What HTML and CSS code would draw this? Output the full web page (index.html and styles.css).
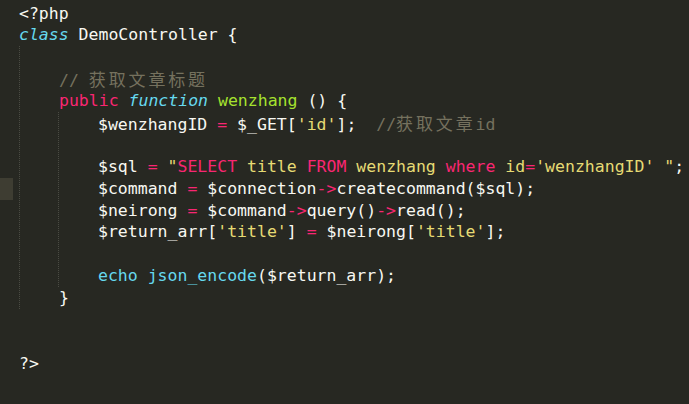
FILE: index.html
```html
<!DOCTYPE html>
<html lang="zh">
<head>
<meta charset="utf-8">
<title>DemoController</title>
<link rel="stylesheet" href="styles.css">
</head>
<body>
<div class="editor">
  <div class="line top"><span class="t">&lt;?php</span></div>
  <div class="line top"><span class="st">class</span> <span class="t">DemoController {</span></div>
  <div class="block outer">
    <div class="line"> </div>
    <div class="line"><span class="cm">// <span class="cjk">获取文章标题</span></span></div>
    <div class="line"><span class="kw">public</span> <span class="st">function</span> <span class="fn">wenzhang</span> <span class="t">() {</span></div>
    <div class="block inner">
      <div class="line"><span class="t">$wenzhangID </span><span class="kw">=</span><span class="t"> $_GET[</span><span class="s">'id'</span><span class="t">];  </span><span class="cm">//<span class="cjk">获取文章</span>id</span></div>
      <div class="line"> </div>
      <div class="line"><span class="t">$sql </span><span class="kw">=</span> <span class="s">"</span><span class="kw">SELECT</span><span class="s"> title </span><span class="kw">FROM</span><span class="s"> wenzhang </span><span class="kw">where</span><span class="s"> id</span><span class="kw">=</span><span class="s">'wenzhangID' "</span><span class="t">;</span></div>
      <div class="line marked"><span class="t">$command </span><span class="kw">=</span><span class="t"> $connection</span><span class="kw">-&gt;</span><span class="t">createcommand($sql);</span></div>
      <div class="line"><span class="t">$neirong </span><span class="kw">=</span><span class="t"> $command</span><span class="kw">-&gt;</span><span class="t">query()</span><span class="kw">-&gt;</span><span class="t">read();</span></div>
      <div class="line"><span class="t">$return_arr[</span><span class="s">'title'</span><span class="t">] </span><span class="kw">=</span><span class="t"> $neirong[</span><span class="s">'title'</span><span class="t">];</span></div>
      <div class="line"> </div>
      <div class="line"><span class="sp">echo</span> <span class="sp">json_encode</span><span class="t">($return_arr);</span></div>
    </div>
    <div class="line"><span class="t">}</span></div>
  </div>
  <div class="line top"> </div>
  <div class="line top"> </div>
  <div class="line top"><span class="t">?&gt;</span></div>
</div>
</body>
</html>
```

FILE: styles.css
```css
html, body {
  margin: 0;
  padding: 0;
  background: #272822;
}

.editor {
  position: relative;
  width: 689px;
  height: 404px;
  box-sizing: border-box;
  padding-top: 2.5px;
  background: #272822;
  font-family: "DejaVu Sans Mono", "Liberation Mono", monospace;
  font-size: 16.5px;
  line-height: 21.9px;
  color: #f8f8f2;
  overflow: hidden;
}

.line {
  height: 21.9px;
  white-space: pre;
}

.line.top {
  padding-left: 19px;
}

.block {
  border-left: 1px dotted #4a4b43;
  padding-left: 39px;
}

.block.outer {
  margin-left: 19px;
}

.block.inner {
  margin-left: -1px;
}

.marked::before {
  content: "";
  position: absolute;
  left: 0;
  width: 13px;
  height: 22px;
  background: #3e3d32;
}

.t { color: #f8f8f2; }
.kw { color: #f92672; }
.st { color: #66d9ef; font-style: italic; }
.sp { color: #66d9ef; }
.fn { color: #a6e22e; }
.s { color: #e6db74; }
.cm { color: #75715e; }

.cjk {
  font-family: "Noto Sans CJK SC", sans-serif;
  font-size: 17px;
  letter-spacing: 2.86px;
}
```
